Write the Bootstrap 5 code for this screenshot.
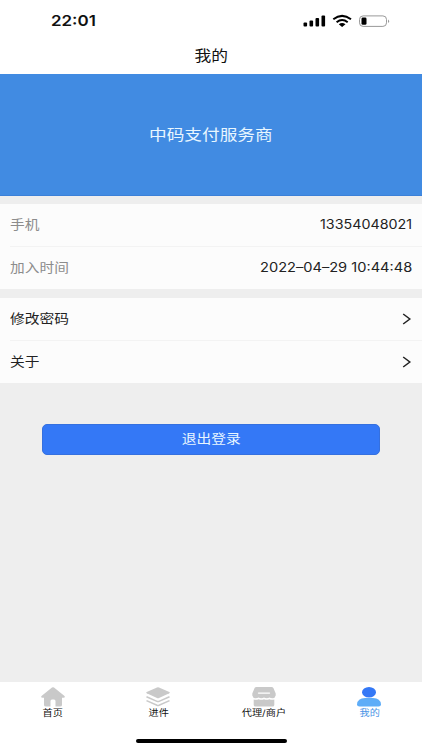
<!DOCTYPE html>
<html lang="zh-CN">
<head>
<meta charset="utf-8">
<meta name="viewport" content="width=device-width, initial-scale=1">
<title>我的</title>
<link href="https://cdn.jsdelivr.net/npm/bootstrap@5.3.0/dist/css/bootstrap.min.css" rel="stylesheet">
<style>
body{font-family:Inter,"Noto Sans CJK SC",sans-serif;background:#eee;color:#222;height:750px;overflow:hidden;font-size:12.6px;line-height:1}
.wide{display:inline-block;transform:scaleX(1.17);white-space:nowrap}
.from-start{transform-origin:left center}
.from-end{transform-origin:right center}
.status{height:41px;padding:0 32px 0 51px}
.clock{font-size:15px;font-weight:600;color:#111;transform:scaleX(1.13)}
.page-title{height:33px;font-size:14.3px;color:#111;padding-bottom:3px}
.hero{height:122px;background:#418be2;color:#e8f6ff;font-size:15.1px;border-bottom:1px solid #3b80d8}
.cells{background:#fcfcfc;padding-left:10px;height:85px}
.cell{height:42px;padding-right:10px}
.cell + .cell{height:43px;border-top:1px solid #f3f3f3}
.cells-gap{margin-top:9px}
.cell-label{color:#8c8c8c}
.phone{transform:scaleX(1.135)}
.joined{transform:scaleX(1.16)}
.logout{width:338px;height:31px;margin-top:41px;background:#3478f6;border:1px solid #3570df;border-radius:5px;color:#e8f6ff;font-size:12.6px;line-height:1}
.tabs{height:68px;background:#fff}
.tab{font-size:8.7px;color:#111;padding-top:5px}
.tab svg{margin-bottom:2px}
.tab.current{color:#4a94e6}
.home-bar{width:151px;height:4px;border-radius:2px;background:#000;margin-bottom:7px}
</style>
</head>
<body class="d-flex flex-column">
<header class="bg-white">
  <div class="status d-flex justify-content-between align-items-center">
    <span class="wide from-start clock">22:01</span>
    <svg width="88" height="14" viewBox="0 0 88 14">
      <g><rect x="1.5" y="8.5" width="3.6" height="4" rx="1"/><rect x="7.5" y="6.6" width="3.6" height="5.9" rx="1"/><rect x="13.5" y="4" width="3.6" height="8.5" rx="1"/><rect x="19.5" y="1.5" width="3.6" height="11" rx="1"/></g>
      <g fill="none" stroke="#000" stroke-width="2"><path d="M31.3 5.2Q40.1 -1.5 49 5.2"/><path d="M34.6 8.2Q40.1 3.9 45.7 8.2"/></g>
      <path d="M36.8 10.2Q40.1 7.7 43.5 10.2L40.1 13Z"/>
      <rect x="57.5" y="1.9" width="27" height="10.5" rx="3.6" fill="none" stroke="#999"/>
      <rect x="59.5" y="3.6" width="5" height="7.2" rx="1.3"/>
      <path d="M86 5.4Q88.2 7.1 86 8.9Z" fill="#999"/>
    </svg>
  </div>
  <div class="page-title d-flex justify-content-center align-items-center"><span class="wide">我的</span></div>
</header>
<section class="hero d-flex justify-content-center align-items-center"><span class="wide">中码支付服务商</span></section>
<section class="cells mt-2">
  <div class="cell d-flex justify-content-between align-items-center"><span class="wide from-start cell-label">手机</span><span class="wide from-end phone">13354048021</span></div>
  <div class="cell d-flex justify-content-between align-items-center"><span class="wide from-start cell-label">加入时间</span><span class="wide from-end joined">2022–04–29 10:44:48</span></div>
</section>
<section class="cells cells-gap">
  <div class="cell d-flex justify-content-between align-items-center"><span class="wide from-start">修改密码</span><svg width="10" height="12" viewBox="0 0 10 12"><path d="M1.2 1L7.8 6L1.2 11" fill="none" stroke="#222" stroke-width="1.5"/></svg></div>
  <div class="cell d-flex justify-content-between align-items-center"><span class="wide from-start">关于</span><svg width="10" height="12" viewBox="0 0 10 12"><path d="M1.2 1L7.8 6L1.2 11" fill="none" stroke="#222" stroke-width="1.5"/></svg></div>
</section>
<button class="btn logout mx-auto p-0 d-flex justify-content-center align-items-center" type="button"><span class="wide">退出登录</span></button>
<footer class="tabs mt-auto d-flex flex-column justify-content-between align-items-center">
  <nav class="row g-0 w-100 text-center">
    <div class="col tab d-flex flex-column align-items-center"><svg width="24" height="20" viewBox="0 0 24 20"><path d="M11 .5Q12 -.2 13 .5L23.5 9Q24.5 10.6 22.5 10.7H21V18Q21 19.5 19 19.5H14.5V14Q14.5 12.5 13 12.5H11Q9.500 12.5 9.500 14V19.5H5Q3 19.5 3 18V10.7H1.5Q-.5 10.6 .5 9Z" fill="#c9c9c9"/></svg><span class="wide">首页</span></div>
    <div class="col tab d-flex flex-column align-items-center"><svg width="24" height="20" viewBox="0 0 24 20"><path d="M11 .4Q12 0 13 .4L23.3 5Q24.2 5.7 23.3 6.3L13 11Q12 11.4 11 11L.7 6.3Q-.2 5.7 .7 5Z" fill="#c9c9c9"/><path d="M.5 9.7L11 14.4Q12 14.8 13 14.4L23.5 9.7M.5 13.6L11 18.3Q12 18.7 13 18.3L23.5 13.6" fill="none" stroke="#c9c9c9" stroke-width="1.5"/></svg><span class="wide">进件</span></div>
    <div class="col tab d-flex flex-column align-items-center"><svg width="24" height="20" viewBox="0 0 24 20"><path d="M4.5 0H19.5Q20.8 0 21.4 1L23.7 6.5V8.5Q23 11.3 20.5 11.3Q18.5 11.3 17.5 10.5Q16.2 11.3 14.7 11.3Q13.1 11.3 12 10.5Q10.8 11.3 9.3 11.3Q7.8 11.3 6.5 10.5Q5.5 11.3 3.5 11.3Q1 11.3 .3 8.5V6.5L2.6 1Q3.2 0 4.5 0ZM1.7 12.6Q4.5 13.2 6.6 12.2Q9.5 13.3 12 12.2Q14.5 13.3 17.4 12.2Q19.5 13.2 22.3 12.6V18Q22.3 19.5 20.3 19.5H3.7Q1.7 19.5 1.7 18Z" fill="#c9c9c9"/><path d="M6.5 6.1H17.5" stroke="#fff" stroke-width="1.4" stroke-linecap="round"/></svg><span class="wide">代理/商户</span></div>
    <div class="col tab current d-flex flex-column align-items-center"><svg width="24" height="20" viewBox="0 0 24 20"><ellipse cx="12" cy="5.2" rx="7" ry="5.2" fill="#3478f6"/><path d="M0 17.5Q.5 11 8 11H16Q23.5 11 24 17.5Q24 19.5 21.5 19.5H2.5Q0 19.5 0 17.5Z" fill="#5eadf8"/></svg><span class="wide">我的</span></div>
  </nav>
  <div class="home-bar"></div>
</footer>
<script src="https://cdn.jsdelivr.net/npm/bootstrap@5.3.0/dist/js/bootstrap.bundle.min.js"></script>
</body>
</html>
